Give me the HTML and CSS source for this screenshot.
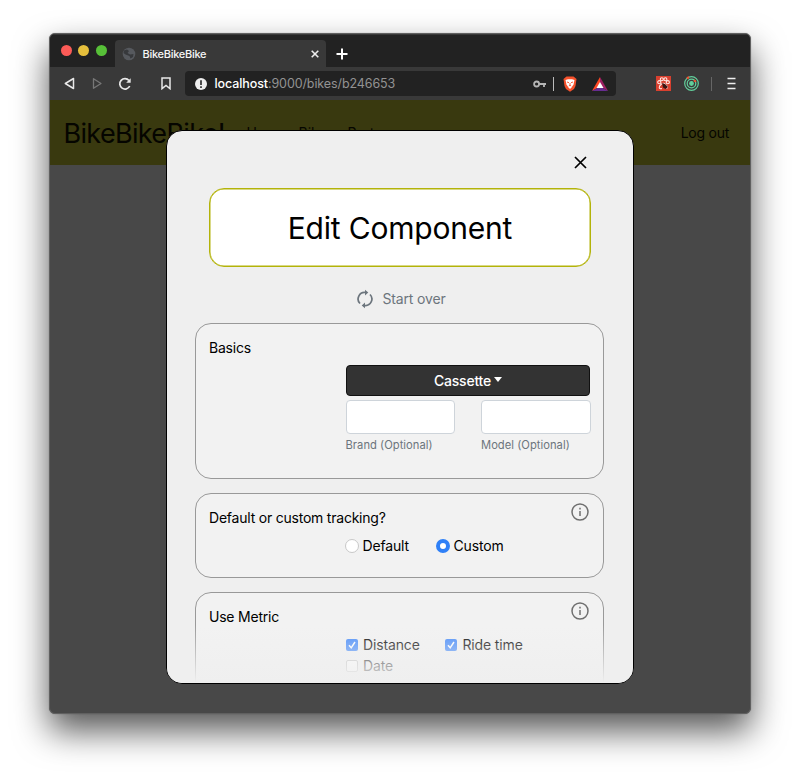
FILE: index.html
```html
<!DOCTYPE html>
<html lang="en">
<head>
<meta charset="utf-8">
<title>BikeBikeBike</title>
<link rel="stylesheet" href="styles.css">
</head>
<body>
<div class="window">
  <div class="tabbar">
    <div class="lights"><i class="red"></i><i class="yellow"></i><i class="green"></i></div>
    <div class="tab">
      <svg width="14" height="14" viewBox="0 0 14 14"><circle cx="7" cy="7" r="6.3" fill="#56595e"/><path d="M2 3.5L5 2.5L7 4L5.5 6L8 7.5L11.5 7L11 10L8.5 11.5L7.5 9L3.5 7.5L1.5 6Z" fill="#37393c"/></svg>
      <span class="tab-title">BikeBikeBike</span>
      <svg width="8" height="8" viewBox="0 0 8 8" stroke="#eee" stroke-width="1.6"><path d="M.7.7L7.3 7.3M7.3.7L.7 7.3"/></svg>
    </div>
    <svg class="plus" width="12" height="12" viewBox="0 0 12 12" stroke="#fff" stroke-width="2"><path d="M6 .5V11.500M.5 6H11.500"/></svg>
  </div>
  <div class="toolbar">
    <svg class="back" width="11" height="13" viewBox="0 0 11 13" fill="none" stroke="#e8e8e8" stroke-width="1.5" stroke-linejoin="round"><path d="M9.500 1.500V11.500L1.300 6.500Z"/></svg>
    <svg class="forward" width="11" height="13" viewBox="0 0 11 13" fill="none" stroke="#777" stroke-width="1.3" stroke-linejoin="round"><path d="M1.500 1.700V11.300L9 6.500Z"/></svg>
    <svg class="reload" width="14" height="14" viewBox="0 0 14 14" fill="none" stroke="#e8e8e8" stroke-width="1.700"><path d="M11 3.500A5.200 5.200 0 1 0 11.700 9"/><path d="M12.700 1.200V5.700H8.200Z" fill="#e8e8e8" stroke="none"/></svg>
    <svg class="bookmark" width="10" height="13" viewBox="0 0 10 13" fill="none" stroke="#e8e8e8" stroke-width="1.500"><path d="M1 1H9V11.700L5 8.500L1 11.700Z"/></svg>
    <div class="address">
      <svg class="info-dot" width="12" height="12" viewBox="0 0 12 12"><circle cx="6" cy="6" r="6" fill="#eee"/><path d="M6 2.300V7M6 8.300V9.900" stroke="#222" stroke-width="1.600"/></svg>
      <span class="url"><b>localhost</b>:9000/bikes/b246653</span>
      <svg class="key" width="13" height="8" viewBox="0 0 13 8" fill="none" stroke="#b5b5b5" stroke-width="1.800"><circle cx="3.600" cy="4" r="2.500"/><path d="M6 4H13M11 4V7"/></svg>
      <span class="rule bright"></span>
      <svg class="brave" width="14" height="16" viewBox="0 0 14 16"><path d="M3.500.5H10.500L13.500 3L12.500 10L11 13L7 15.700L3 13L1.500 10L.5 3Z" fill="#f4512c"/><path d="M2.500 4L5 3.300H9L11.500 4L10.500 8.500L8.500 11.500L7 13L5.500 11.500L3.500 8.500Z" fill="#fff"/><path d="M4 6L6 6.700M10 6L8 6.700M7 7V9M5.800 10L7 9.300L8.200 10" stroke="#f4512c" stroke-width=".9" fill="none"/></svg>
      <svg class="bat" width="16" height="14" viewBox="0 0 16 14"><path d="M8 0L0 14L8 9.500Z" fill="#ff4724"/><path d="M8 0L16 14L8 9.500Z" fill="#9e1f63"/><path d="M0 14L8 9.500L16 14Z" fill="#662d91"/><path d="M8 5L4.500 11H11.500Z" fill="#fff"/></svg>
    </div>
    <svg class="ext-red" width="15" height="15" viewBox="0 0 15 15"><path d="M0 0H15V15H0Z" fill="#d8402f"/><g fill="none" stroke="#ffe9e5" stroke-width="1.100"><circle cx="3.300" cy="6.200" r="1.600"/><circle cx="5.800" cy="3.300" r="1.500"/><circle cx="9.400" cy="3.300" r="1.500"/><circle cx="11.800" cy="6.200" r="1.600"/><path d="M6 12.500C2 13.500 3 10 5 8.500S8 6.500 9.500 8.500S12.500 11 10.500 12.500"/></g><path d="M6 7L9 8L12 11L9.500 13L7 11.500Z" fill="#3a1513"/></svg>
    <svg class="ext-green" width="15" height="15" viewBox="0 0 15 15" fill="none" stroke="#62cf9b" stroke-width="1.200"><circle cx="7.500" cy="7.500" r="6.800"/><circle cx="7.500" cy="7.500" r="4.300"/><circle cx="7.500" cy="7.500" r="1.800" fill="#62cf9b"/><path d="M3 2.400A6.800 6.800 0 0 1 5 1.200M10 4A4.300 4.300 0 0 1 11.500 6" stroke="#ef5533" stroke-width="2"/></svg>
    <span class="rule"></span>
    <svg class="menu" width="9" height="13" viewBox="0 0 9 13" stroke="#eee" stroke-width="1.700"><path d="M.5 1.500H8.500M.5 6.500H8.500M.5 11.500H8.500"/></svg>
  </div>
  <div class="page">
    <header class="site-header">
      <span class="brand">BikeBikeBike!</span>
      <nav><span>Home</span><span>Bikes</span><span>Parts</span></nav>
      <span class="logout">Log out</span>
    </header>
    <main class="modal">
      <svg class="close" width="13" height="13" viewBox="0 0 13 13" stroke="#000" stroke-width="1.700"><path d="M1 1L12 12M12 1L1 12"/></svg>
      <h1><span>Edit Component</span></h1>
      <div class="restart">
        <svg width="16" height="20" viewBox="0 0 16 20" fill="none" stroke="#6c757d" stroke-width="1.700"><path d="M3 14.500A6.500 6.500 0 0 1 8.500 3.500M13 5.500A6.500 6.500 0 0 1 7.500 16.500"/><path d="M8 .7L11.300 3.600L8 6.500ZM8 13.500L4.700 16.400L8 19.300Z" fill="#6c757d" stroke="none"/></svg>
        <span>Start over</span>
      </div>
      <section class="card basics">
        <h2>Basics</h2>
        <div class="fields">
          <button class="dropdown"><span>Cassette</span><i></i></button>
          <div class="inputs">
            <label><input type="text"><small>Brand (Optional)</small></label>
            <label><input type="text"><small>Model (Optional)</small></label>
          </div>
        </div>
      </section>
      <section class="card tracking">
        <h2>Default or custom tracking?</h2>
        <svg class="info" width="18" height="18" viewBox="0 0 18 18" fill="none" stroke="#6f6f6f" stroke-width="1.500"><circle cx="9" cy="9" r="8"/><path d="M9 8V13M9 4.700V6.400"/></svg>
        <div class="options">
          <label class="first"><i class="radio"></i><span>Default</span></label>
          <label><i class="radio on"></i><span>Custom</span></label>
        </div>
      </section>
      <section class="card metric">
        <h2>Use Metric</h2>
        <svg class="info" width="18" height="18" viewBox="0 0 18 18" fill="none" stroke="#6f6f6f" stroke-width="1.500"><circle cx="9" cy="9" r="8"/><path d="M9 8V13M9 4.700V6.400"/></svg>
        <div class="checks">
          <label><svg class="check" width="12" height="12" viewBox="0 0 12 12"><rect width="12" height="12" rx="2" fill="#4188fa"/><path d="M3 6.300L5.200 8.800L9 3" fill="none" stroke="#fff" stroke-width="1.500"/></svg><span>Distance</span></label>
          <label><svg class="check" width="12" height="12" viewBox="0 0 12 12"><rect width="12" height="12" rx="2" fill="#4188fa"/><path d="M3 6.300L5.200 8.800L9 3" fill="none" stroke="#fff" stroke-width="1.500"/></svg><span>Ride time</span></label>
          <label><i class="box"></i><span>Date</span></label>
        </div>
      </section>
      <div class="fade"></div>
    </main>
  </div>
</div>
</body>
</html>
```
FILE: styles.css
```css
* { box-sizing: border-box; }
body { margin: 0; height: 779px; overflow: hidden; background: #fff; padding: 33px 49px; font: 14.5px/20px Inter, "Liberation Sans", sans-serif; color: #000; }
svg { display: block; flex: none; }
span, small { white-space: nowrap; }
.window { width: 702px; height: 681px; border: 1px solid #606060; border-radius: 6px; overflow: hidden; background: #484848; box-shadow: 0 0 1px rgba(0,0,0,.45), 0 17px 34px rgba(0,0,0,.66); }
.tabbar { height: 33px; background: #222; display: flex; align-items: flex-start; border-top: 1px solid #383838; }
.lights { display: flex; gap: 6.700px; padding: 10px 0 0 10.800px; width: 65px; }
.lights i { width: 11px; height: 11px; border-radius: 50%; }
.red { background: #fc5b57; }
.yellow { background: #e5bf3c; }
.green { background: #57c038; }
.tab { width: 211px; height: 27px; margin-top: 5px; border-radius: 4px 4px 0 0; background: #393939; display: flex; align-items: center; padding: 0 7px; }
.tab svg:last-child { margin-left: auto; }
.tab-title { margin-left: 6.500px; font-size: 11px; font-weight: 500; color: #f5f5f5; letter-spacing: -.28px; }
.plus { margin: 13px 0 0 10px; }
.toolbar { height: 33px; background: #393939; display: flex; align-items: center; padding: 0 14px 0 14px; }
.forward { margin-left: 17px; }
.reload { margin-left: 15px; }
.bookmark { margin-left: 29px; }
.address { width: 431px; height: 25px; margin-left: 14px; border-radius: 4px; background: #222; display: flex; align-items: center; padding: 0 8px 0 10px; }
.url { margin-left: 7.500px; font-size: 12.500px; color: #929292; letter-spacing: -.1px; }
.url b { color: #fff; font-weight: 500; }
.key { margin-left: auto; }
.rule { width: 1px; height: 14px; background: #666; margin-left: 12px; }
.rule.bright { background: #bbb; margin-left: 7px; }
.brave { margin-left: 9px; }
.bat { margin-left: 15px; }
.ext-red { margin-left: 40px; }
.ext-green { margin-left: 13px; }
.menu { margin-left: auto; }
.page { position: relative; height: 613px; }
.site-header { height: 65px; background: #39390f; display: flex; align-items: center; padding: 0 21px 0 13.500px; color: #050500; }
.brand { font-size: 27px; line-height: 40px; width: 183px; margin-top: 2px; letter-spacing: -.68px; }
.site-header nav { display: flex; font-size: 14px; }
.site-header nav span { width: 49px; }
.site-header nav span:first-child { width: 52px; }
.logout { margin-left: auto; font-size: 14px; letter-spacing: -.25px; }
.modal { position: absolute; left: 116px; top: 30px; width: 468px; height: 554px; border: 1px solid #000; border-radius: 16px; background: #efefef; overflow: hidden; padding: 0 29px 0 28px; }
.close { margin: 25px 0 0 379px; }
h1 { margin: 19px 13px 0 14px; height: 79px; border: 1px solid #b3b30a; box-shadow: inset 0 0 0 .5px #b3b30a; border-radius: 15px; background: #fff; display: flex; align-items: center; justify-content: center; font-size: 30px; font-weight: 400; line-height: 40px; letter-spacing: -.2px; }
.restart { height: 56px; padding: 8px 0 0 4px; display: flex; align-items: center; justify-content: center; gap: 9px; color: #6c757d; font-size: 14px; letter-spacing: -.14px; }
.card { position: relative; border: 1px solid #999; border-radius: 16px; background: #f2f2f2; margin: 0 0 14px; padding: 14px 13px 0; }
.basics { height: 156px; }
.tracking { height: 85px; }
.metric { height: 120px; }
h2 { margin: 0; font-size: 14px; font-weight: 400; line-height: 20px; letter-spacing: -.22px; }
.fields { margin: 7px 0 0 136.500px; width: 245px; }
.dropdown { width: 244px; height: 31px; margin-left: .5px; border: 1px solid #111; border-radius: 4px; background: #333; color: #fff; font: 500 14px/20px Inter, sans-serif; letter-spacing: -.2px; display: flex; align-items: center; justify-content: center; padding: 0; gap: 3px; }
.dropdown i { border: 4.500px solid transparent; border-top-color: #fff; border-bottom: 0; border-top-width: 5px; margin-bottom: 2px; }
.inputs { display: flex; gap: 26px; margin-top: 4px; }
.inputs label { width: 110px; }
input { display: block; width: 100%; height: 34px; border: 1px solid #ced4da; border-radius: 4px; background: #fff; }
small { display: block; margin-top: 3px; font-size: 11.200px; line-height: 16px; color: #6c757d; letter-spacing: .03px; }
.info { position: absolute; right: 14px; top: 9px; }
.options { display: flex; margin: 8px 0 0 135.500px; font-size: 14px; letter-spacing: -.15px; }
label { display: flex; align-items: center; }
.inputs label { display: block; }
.options .first { width: 91px; }
.radio { width: 14px; height: 14px; margin-right: 4px; border: 1px solid #c8c8c8; border-radius: 50%; background: #fff; }
.radio.on { border: 4.500px solid #2f80f7; }
.checks { display: grid; grid-template-columns: 99.500px 120px; grid-auto-rows: 21px; margin: 7px 0 0 136.500px; font-size: 14px; letter-spacing: -.14px; }
.check, .box { width: 12px; height: 12px; margin-right: 5.500px; }
.box { border: 1px solid #bbb; border-radius: 2px; background: #fff; }
.fade { position: absolute; left: 0; right: 0; bottom: 0; height: 58px; background: linear-gradient(rgba(239,239,239,0), #efefef); }
```
